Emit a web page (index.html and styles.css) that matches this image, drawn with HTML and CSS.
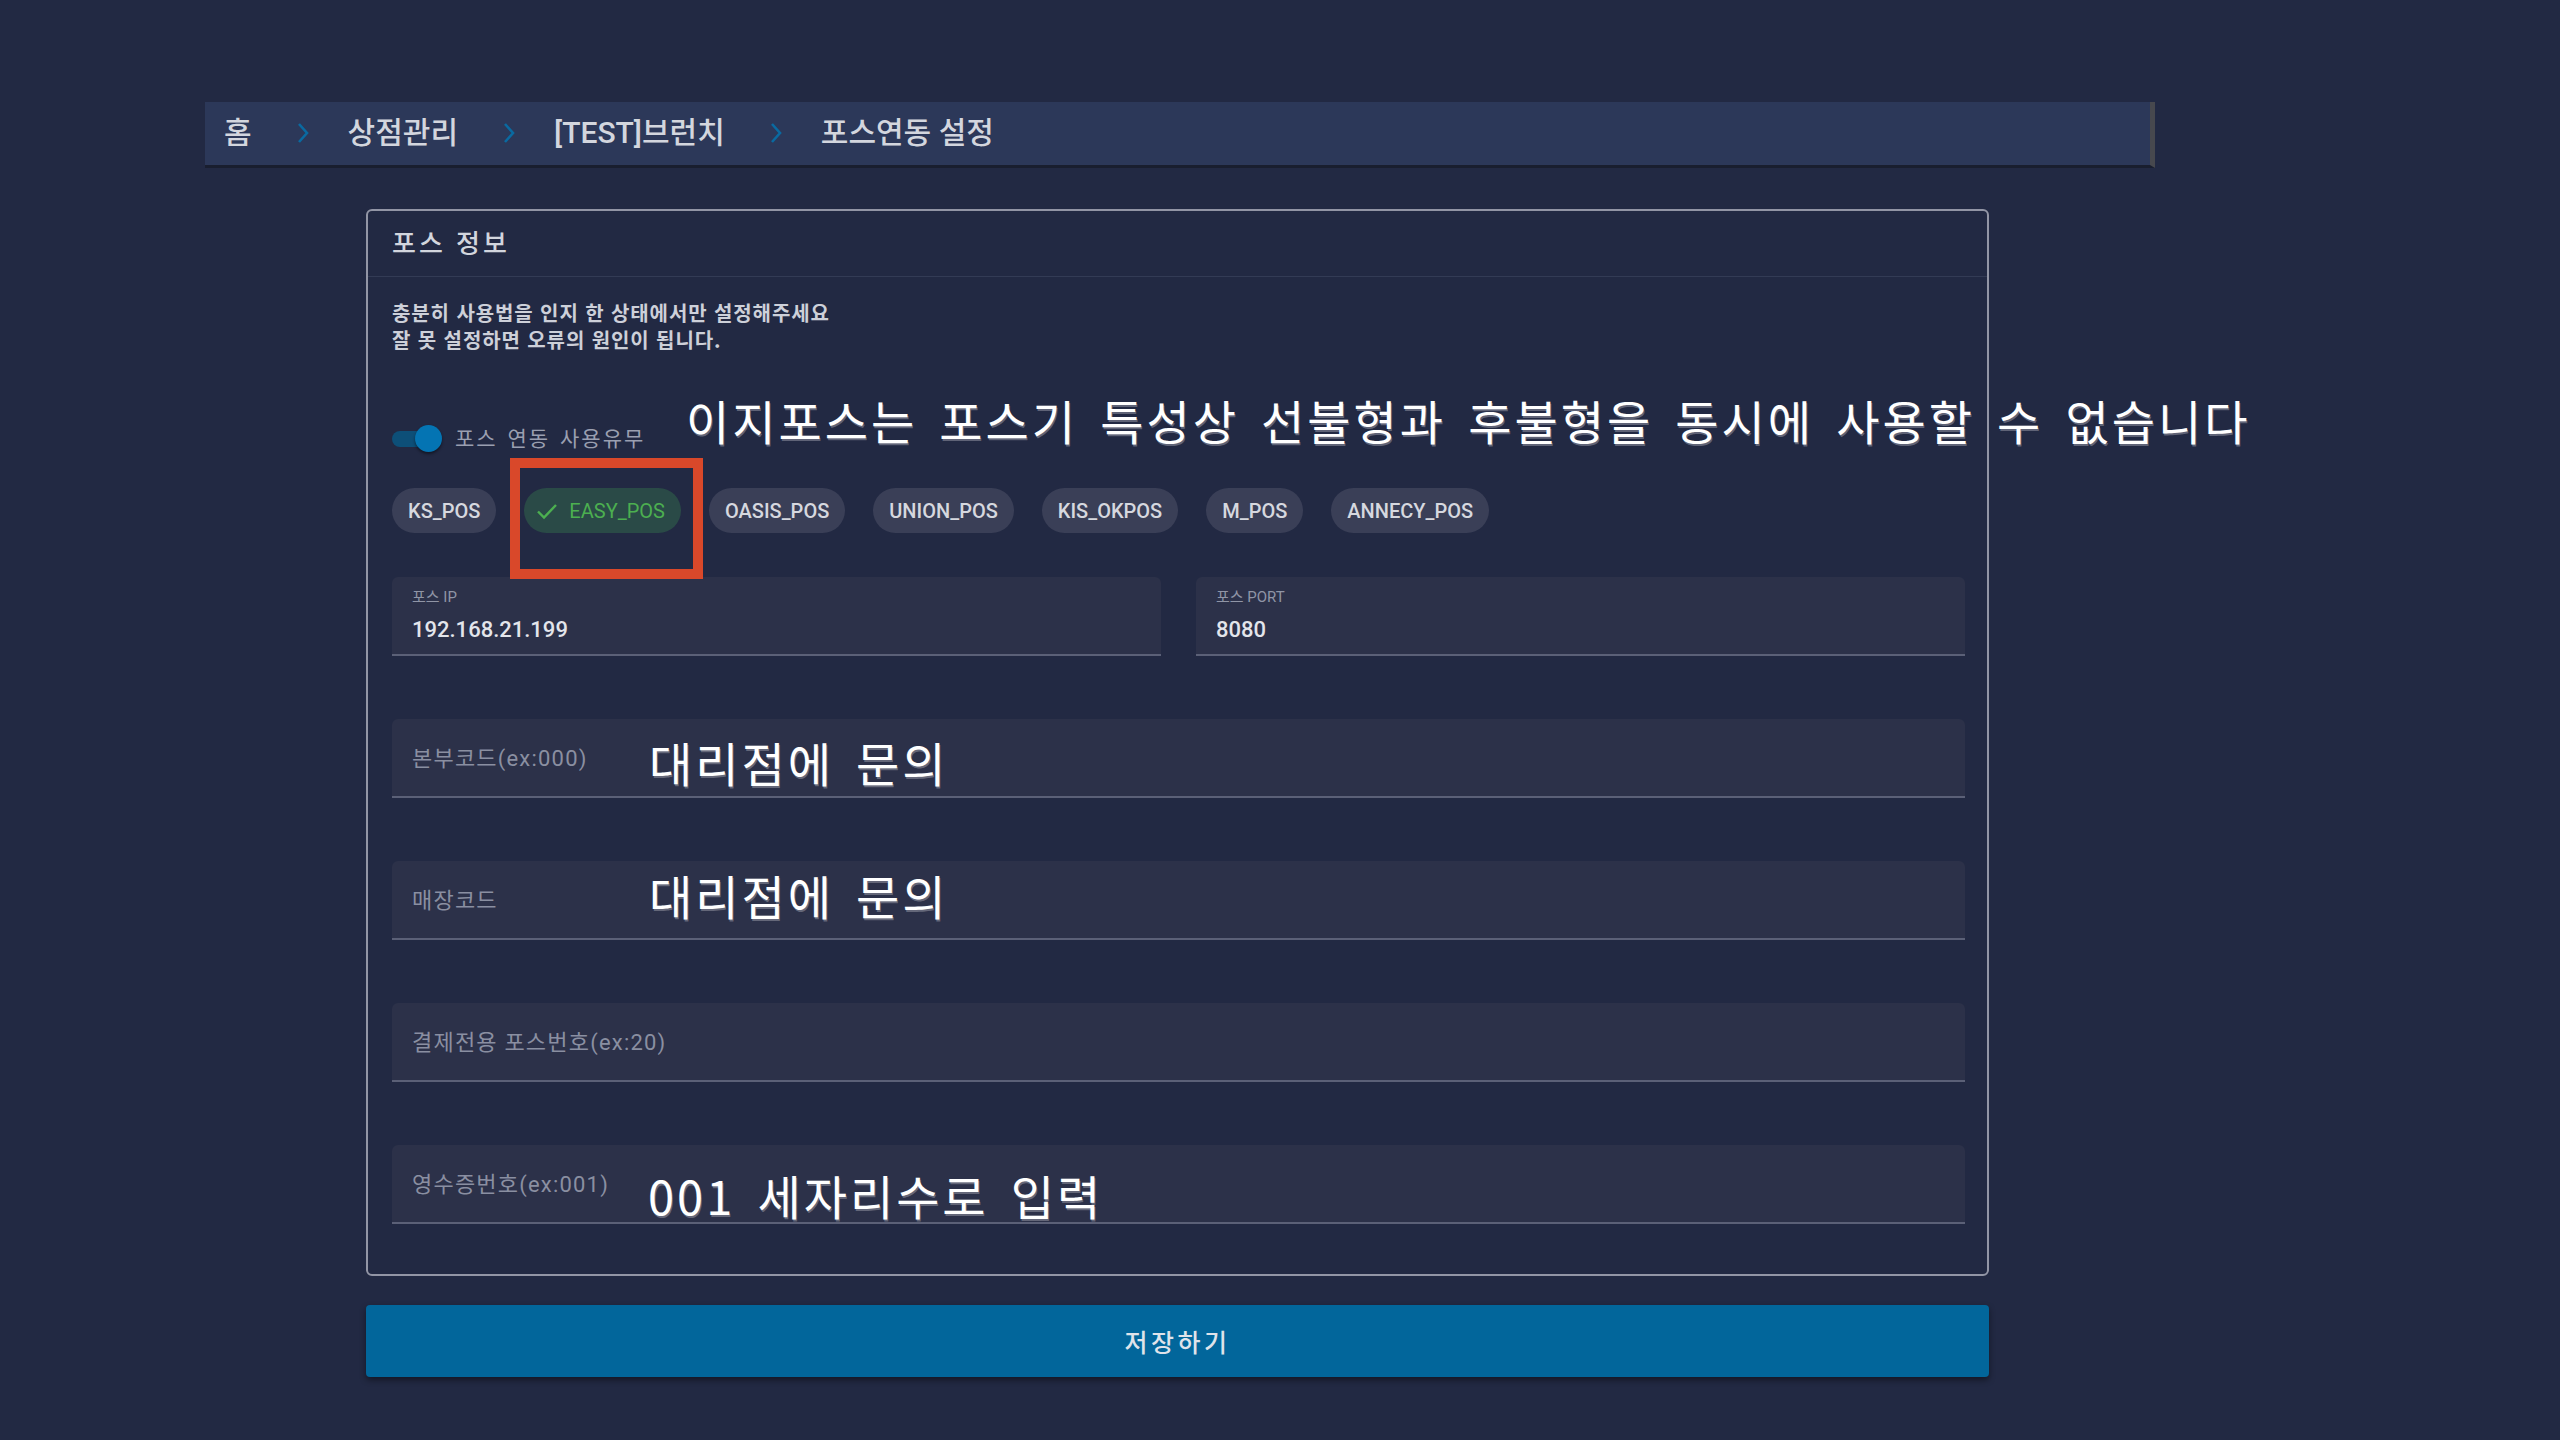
FILE: index.html
```html
<!DOCTYPE html>
<html lang="ko">
<head>
<meta charset="utf-8">
<title>포스연동 설정</title>
<link rel="stylesheet" href="styles.css">
</head>
<body>
<div class="page">
  <nav class="crumbs">
    <span class="crumb">홈</span>
    <svg class="sep" viewBox="0 0 14 24"><path d="M3 3 L11 12 L3 21" fill="none" stroke="currentColor" stroke-width="2.6"/></svg>
    <span class="crumb">상점관리</span>
    <svg class="sep" viewBox="0 0 14 24"><path d="M3 3 L11 12 L3 21" fill="none" stroke="currentColor" stroke-width="2.6"/></svg>
    <span class="crumb">[TEST]브런치</span>
    <svg class="sep" viewBox="0 0 14 24"><path d="M3 3 L11 12 L3 21" fill="none" stroke="currentColor" stroke-width="2.6"/></svg>
    <span class="crumb">포스연동 설정</span>
  </nav>

  <main class="content">
    <section class="card">
      <header class="card-head">포스 정보</header>
      <div class="card-body">
        <p class="desc">충분히 사용법을 인지 한 상태에서만 설정해주세요<br>잘 못 설정하면 오류의 원인이 됩니다.</p>

        <div class="switch-row">
          <span class="switch"><span class="track"></span><span class="thumb"></span></span>
          <span class="switch-label">포스 연동 사용유무</span>
        </div>

        <div class="chips">
          <span class="chip">KS_POS</span>
          <span class="chip chip-on"><svg class="check" viewBox="0 0 24 24"><path d="M3 12.5 L9 18.5 L21 6" fill="none" stroke="currentColor" stroke-width="2.4"/></svg>EASY_POS</span>
          <span class="chip">OASIS_POS</span>
          <span class="chip">UNION_POS</span>
          <span class="chip">KIS_OKPOS</span>
          <span class="chip">M_POS</span>
          <span class="chip">ANNECY_POS</span>
        </div>

        <div class="pair">
          <div class="field filled">
            <span class="small-label">포스 IP</span>
            <span class="value">192.168.21.199</span>
          </div>
          <div class="field filled">
            <span class="small-label">포스 PORT</span>
            <span class="value">8080</span>
          </div>
        </div>

        <div class="field empty"><span class="ph">본부코드(ex:000)</span><span class="note note-a">대리점에 문의</span></div>
        <div class="field empty"><span class="ph">매장코드</span><span class="note note-b">대리점에 문의</span></div>
        <div class="field empty"><span class="ph">결제전용 포스번호(ex:20)</span></div>
        <div class="field empty"><span class="ph">영수증번호(ex:001)</span><span class="note note-c">001 세자리수로 입력</span></div>
      </div>
    </section>
    <button class="save">저장하기</button>
  </main>

  <div class="note-big">이지포스는 포스기 특성상 선불형과 후불형을 동시에 사용할 수 없습니다</div>
  <div class="red-box"></div>
</div>
</body>
</html>
```

FILE: styles.css
```css
html, body {
  margin: 0;
  padding: 0;
  background: #222943;
}

body {
  font-family: "Noto Sans CJK KR", Roboto, sans-serif;
  color: #d4d7df;
}

.page {
  position: relative;
  min-height: 1440px;
  padding: 102px 0 0 205px;
  box-sizing: border-box;
}

/* breadcrumb */
.crumbs {
  width: 1950px;
  height: 66px;
  box-sizing: border-box;
  background: #2c3859;
  border-bottom: 3px solid #191e2f;
  border-right: 5px solid #47484e;
  display: flex;
  align-items: center;
  padding: 0 0 7px 19px;
}

.crumb {
  font-family: Roboto, "Noto Sans CJK KR", sans-serif;
  font-size: 30px;
  font-weight: 500;
  color: #d3d6de;
}

.sep {
  width: 14px;
  height: 24px;
  color: #0a6aa1;
  margin: 6px 38px 0 44px;
}

/* main column */
.content {
  width: 1623px;
  margin: 41px 0 0 161px;
}

.card {
  border: 2px solid #9295a5;
  border-radius: 6px;
}

.card-head {
  height: 66px;
  box-sizing: border-box;
  padding: 0 0 5px 24px;
  border-bottom: 1px solid #333b55;
  display: flex;
  align-items: center;
  font-size: 26px;
  font-weight: 500;
  letter-spacing: 3px;
  color: #d2d5dd;
}

.card-body {
  padding: 22px 22px 50px 24px;
}

.desc {
  margin: 0;
  font-size: 20px;
  line-height: 27px;
  font-weight: 700;
  letter-spacing: 0.9px;
  color: #cdd0d9;
}

/* switch */
.switch-row {
  margin-top: 66px;
  height: 40px;
  display: flex;
  align-items: center;
}

.switch {
  position: relative;
  width: 50px;
  height: 28px;
  display: inline-block;
}

.track {
  position: absolute;
  left: 0;
  top: 6px;
  width: 46px;
  height: 16px;
  border-radius: 8px;
  background: #0d4f78;
}

.thumb {
  position: absolute;
  left: 23px;
  top: 0;
  width: 27px;
  height: 27px;
  border-radius: 50%;
  background: #0474b3;
  box-shadow: 0 2px 3px rgba(0, 0, 0, 0.45);
}

.switch-label {
  margin: 0 0 4px 13px;
  font-size: 21px;
  letter-spacing: 2px;
  word-spacing: 2px;
  color: #9a9fb0;
}

/* chips */
.chips {
  margin-top: 29px;
  display: flex;
  gap: 28px;
}

.chip {
  height: 45px;
  padding: 0 16px;
  border-radius: 23px;
  background: #3a3f57;
  display: inline-flex;
  align-items: center;
  font-family: Roboto, sans-serif;
  font-size: 20px;
  font-weight: 500;
  color: #d6d8df;
}

.chip-on {
  background: #2a4a47;
  color: #4caf50;
  font-weight: 400;
  padding-left: 11px;
}

.check {
  width: 24px;
  height: 24px;
  margin-right: 10px;
}

/* fields */
.pair {
  margin-top: 44px;
  display: flex;
  gap: 35px;
}

.pair .field {
  flex: 1;
}

.field {
  position: relative;
  height: 79px;
  box-sizing: border-box;
  background: #2c3149;
  border-radius: 6px 6px 0 0;
  border-bottom: 2px solid #5b6077;
  padding-left: 20px;
}

.filled {
  display: flex;
  flex-direction: column;
  padding-top: 10px;
}

.small-label {
  font-family: Roboto, "Noto Sans CJK KR", sans-serif;
  font-size: 15px;
  line-height: 20px;
  color: #9095a6;
}

.value {
  margin-top: 9px;
  font-family: Roboto, sans-serif;
  font-size: 22px;
  line-height: 28px;
  font-weight: 500;
  color: #e3e5eb;
}

.empty {
  margin-top: 63px;
  display: flex;
  align-items: center;
  padding-bottom: 4px;
}

.ph {
  font-family: Roboto, "Noto Sans CJK KR", sans-serif;
  font-size: 22px;
  letter-spacing: 1.2px;
  color: #8a8fa1;
}

/* annotation overlays */
.note, .note-big {
  position: absolute;
  font-family: "Noto Sans CJK KR", sans-serif;
  font-size: 47px;
  line-height: 1;
  font-weight: 400;
  letter-spacing: 3px;
  word-spacing: 6px;
  color: #ffffff;
  white-space: nowrap;
  text-shadow: 1px 2px 0 rgba(150, 152, 165, 0.55);
}

.note-a { left: 257px; top: 19px; }
.note-b { left: 257px; top: 10px; }
.note-c { left: 256px; top: 26px; }

.note-big {
  left: 686px;
  top: 396px;
}

.red-box {
  position: absolute;
  left: 510px;
  top: 458px;
  width: 193px;
  height: 121px;
  box-sizing: border-box;
  border: 10px solid #d9482a;
}

/* save button */
.save {
  display: block;
  width: 100%;
  height: 72px;
  margin-top: 29px;
  border: none;
  border-radius: 4px;
  background: #02669b;
  box-shadow: 0 3px 6px rgba(0, 0, 0, 0.45);
  font-family: "Noto Sans CJK KR", sans-serif;
  font-size: 25px;
  font-weight: 500;
  letter-spacing: 3.5px;
  color: #dfe3ea;
}
```
